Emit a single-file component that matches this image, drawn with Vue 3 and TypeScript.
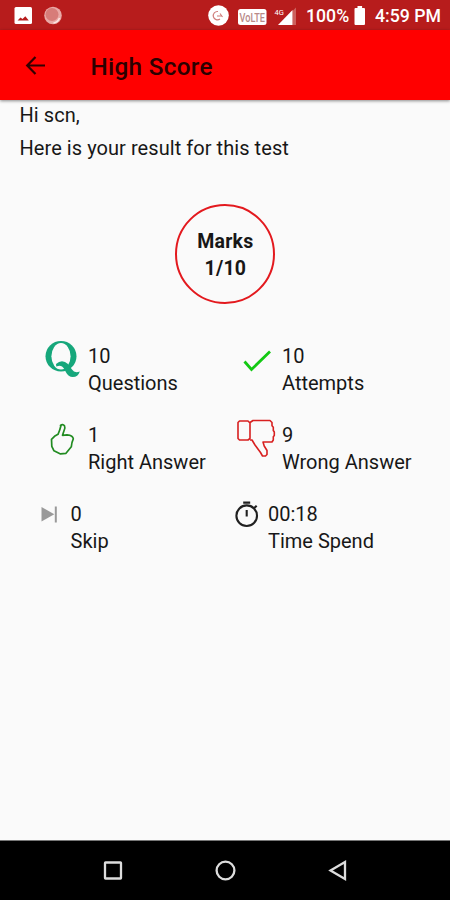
<script setup lang="ts">
interface Stat {
  icon: string
  value: string
  label: string
}

const stats: Stat[] = [
  { icon: 'questions', value: '10', label: 'Questions' },
  { icon: 'attempts', value: '10', label: 'Attempts' },
  { icon: 'right', value: '1', label: 'Right Answer' },
  { icon: 'wrong', value: '9', label: 'Wrong Answer' },
  { icon: 'skip', value: '0', label: 'Skip' },
  { icon: 'time', value: '00:18', label: 'Time Spend' },
]
</script>

<template>
  <div class="screen">
    <div class="status">
      <svg class="notes" width="70" height="30" viewBox="0 0 70 30">
        <rect x="14.5" y="7" width="17.5" height="17" rx="1.5" fill="#fff" />
        <path d="M17.500 20.500l3-3 2 1.500 2.800-2.700 3.500 4.200z" fill="#b71c1c" />
        <circle cx="53" cy="15.5" r="8.8" fill="#e9a9a6" />
        <circle cx="52" cy="14.5" r="6.5" fill="#d77c79" />
        <path d="M59.5 18a8 8 0 0 1-6 5" fill="none" stroke="#fbe4e2" stroke-width="1.6" />
      </svg>
      <div class="system">
        <svg width="92" height="30" viewBox="0 0 92 30">
          <circle cx="10.5" cy="15.5" r="10.3" fill="#fff" />
          <path d="M10 11.500a4.200 4.200 0 1 0 2 7.500M9 16h4.500M12 13.500l2.500 3.500" fill="none" stroke="#cf7b79" stroke-width="1.1" />
          <rect x="30" y="9" width="28.5" height="16" rx="2.5" fill="#fff" />
          <text x="31.500" y="21.500" textLength="25.500" lengthAdjust="spacingAndGlyphs" class="volte">VoLTE</text>
          <text x="66.500" y="15" class="network">4G</text>
          <path d="M84.500 11l3.500-3.500V25h-3.500z" fill="#cc605d" />
          <path d="M84.500 10v15H70z" fill="#fff" />
        </svg>
        <span class="percent">100%</span>
        <svg class="battery" width="12" height="30" viewBox="0 0 12 30">
          <path d="M3.5 6h4.6v2H10q1 0 1 1v15q0 1-1 1H1.500q-1 0-1-1V9q0-1 1-1h2z" fill="#fff" />
        </svg>
        <span class="clock">4:59 PM</span>
      </div>
    </div>

    <header class="bar">
      <svg width="24" height="24" viewBox="0 0 24 24">
        <path d="M11.500 4L3.200 12.500l8.300 8.500M3.500 12.500H21" fill="none" stroke="#330000" stroke-width="2.200" />
      </svg>
      <h1>High Score</h1>
    </header>

    <main>
      <p class="hi">Hi scn,</p>
      <p class="intro">Here is your result for this test</p>
      <div class="marks">
        <span>Marks</span>
        <span>1/10</span>
      </div>
      <div class="stats">
        <div v-for="s in stats" :key="s.icon" class="stat" :class="s.icon">
          <svg class="icon" width="42" height="44" viewBox="0 0 42 44">
            <g v-if="s.icon === 'questions'">
              <ellipse cx="21" cy="17.300" rx="15.500" ry="15.300" fill="#16a77b" />
              <ellipse cx="21" cy="17.300" rx="9.600" ry="13.200" fill="#fafafa" />
              <path d="M16 25q6-5.500 12 0l4 5.500q2.500 4 7.800 2-1.800 5.500-7 5.500-4.500 0-7-5-2.500-5.500-5-6-1.500-.5-4.500.5z" fill="#16a77b" />
            </g>
            <path v-else-if="s.icon === 'attempts'" d="M10.500 22.500l7 8L36 12.500" fill="none" stroke="#13c913" stroke-width="2.800" />
            <path v-else-if="s.icon === 'right'" d="M20.500 5.500q2.200-2 4 .3 1 2-.5 5l-1.500 4.500 4.500-.500q6 .5 6.300 4-1.500 3-2 8l-5.300 6.500-5.500.6-6.500-3.100-2.200-4.500-.300-7 3-3 3.500-2q2-4.500 3-8.800z" fill="none" stroke="#218b21" stroke-width="1.700" stroke-linejoin="round" />
            <g v-else-if="s.icon === 'wrong'" fill="none" stroke="#d82020" stroke-width="1.600" stroke-linejoin="round">
              <path d="M5.500 2h8.500l2 2v15.500l-2 1.500H5.500L4 19.500v-16z" />
              <path d="M16 3.500l3-2h17l2 2v3.300l1.300 1.500v3.200l1 1.500v3.500l-1 1.200v3.300L38 23h-9l1.200 4 2.800 4.500v4l-1.500 1.500h-3l-2-3.500-5.500-7.500L18 21h-2" />
            </g>
            <g v-else-if="s.icon === 'skip'">
              <path d="M1.500 10v14.500L14.300 17.200z" fill="#999" />
              <path d="M15.800 9.500v16" stroke="#999" stroke-width="2" />
            </g>
            <g v-else fill="none" stroke="#202020" stroke-width="2.100">
              <circle cx="12.700" cy="18.700" r="10.300" />
              <path d="M9.200 5.600h7M12.700 13v6.500M19.700 11.500l3-2.700" />
            </g>
          </svg>
          <div class="copy">
            <span>{{ s.value }}</span>
            <span>{{ s.label }}</span>
          </div>
        </div>
      </div>
    </main>

    <nav>
      <svg width="20" height="20" viewBox="0 0 20 20"><rect x="2" y="1.500" width="16" height="16" rx=".5" /></svg>
      <svg width="20" height="20" viewBox="0 0 20 20"><circle cx="10.500" cy="9.500" r="8.900" /></svg>
      <svg width="20" height="20" viewBox="0 0 20 20"><path d="M17 1v17L2.500 9.500z" /></svg>
    </nav>
  </div>
</template>

<style>
body { margin: 0; }
</style>

<style scoped>
.screen {
  width: 450px;
  height: 900px;
  display: flex;
  flex-direction: column;
  background: #fafafa;
  color: #171717;
  font-family: Roboto, "Liberation Sans", sans-serif;
  font-size: 20px;
  overflow: hidden;
}
svg { display: block; flex: none; overflow: visible; }
.status {
  height: 30px;
  flex: none;
  display: flex;
  justify-content: space-between;
  background: #b71c1c;
  color: #fff;
}
.system { display: flex; padding-right: 10px; }
.system span { font-size: 17.700px; font-weight: 500; line-height: 33px; white-space: nowrap; }
.percent { width: 42px; margin-left: 6px; }
.battery { margin: 0 9px 0 6px; }
.clock { width: 65px; }
.volte { font-size: 13.500px; fill: #b98a88; font-weight: 500; }
.network { font-size: 7.500px; fill: #fff; }
.bar {
  height: 70px;
  flex: none;
  display: flex;
  align-items: center;
  padding-left: 24px;
  background: #f00;
  box-shadow: 0 1px 3px rgba(0, 0, 0, .45);
  z-index: 1;
}
h1 { margin: 4px 0 0 42.500px; font-size: 24.300px; font-weight: 500; letter-spacing: .3px; color: #2c0000; line-height: 30px; }
main { flex: 1; display: flex; flex-direction: column; }
p { margin: 0 0 0 19.500px; line-height: 30px; letter-spacing: .06px; }
.intro { margin-top: 3px; }
.marks {
  box-sizing: border-box;
  width: 100px;
  height: 100px;
  margin: 41px 0 0 175.400px;
  border: 2px solid #e3191e;
  border-radius: 50%;
  display: flex;
  flex-direction: column;
  align-items: center;
  justify-content: center;
  padding-top: 2px;
  font-weight: 700;
  font-size: 19.500px;
  letter-spacing: .25px;
  line-height: 27px;
}
.stats {
  display: grid;
  grid-template-columns: 194px 1fr;
  grid-auto-rows: 79px;
  margin: 38px 0 0 40px;
}
.stat { display: flex; }
.copy { display: flex; flex-direction: column; line-height: 27px; margin-left: 6px; padding-top: 1px; white-space: nowrap; }
.icon { margin-top: -3px; }
.right .icon { margin-top: -1px; }
.wrong .icon { margin-top: -2px; }
.skip .copy { margin-left: -11.500px; }
.time .copy { margin-left: -8px; }
nav {
  height: 59px;
  flex: none;
  display: grid;
  grid-template-columns: 20px 20px 20px;
  column-gap: 92.500px;
  justify-content: center;
  align-items: center;
  background: #000;
  border-top: 1px solid #777;
}
nav svg { fill: none; stroke: #ddd; stroke-width: 2.300; }
</style>
